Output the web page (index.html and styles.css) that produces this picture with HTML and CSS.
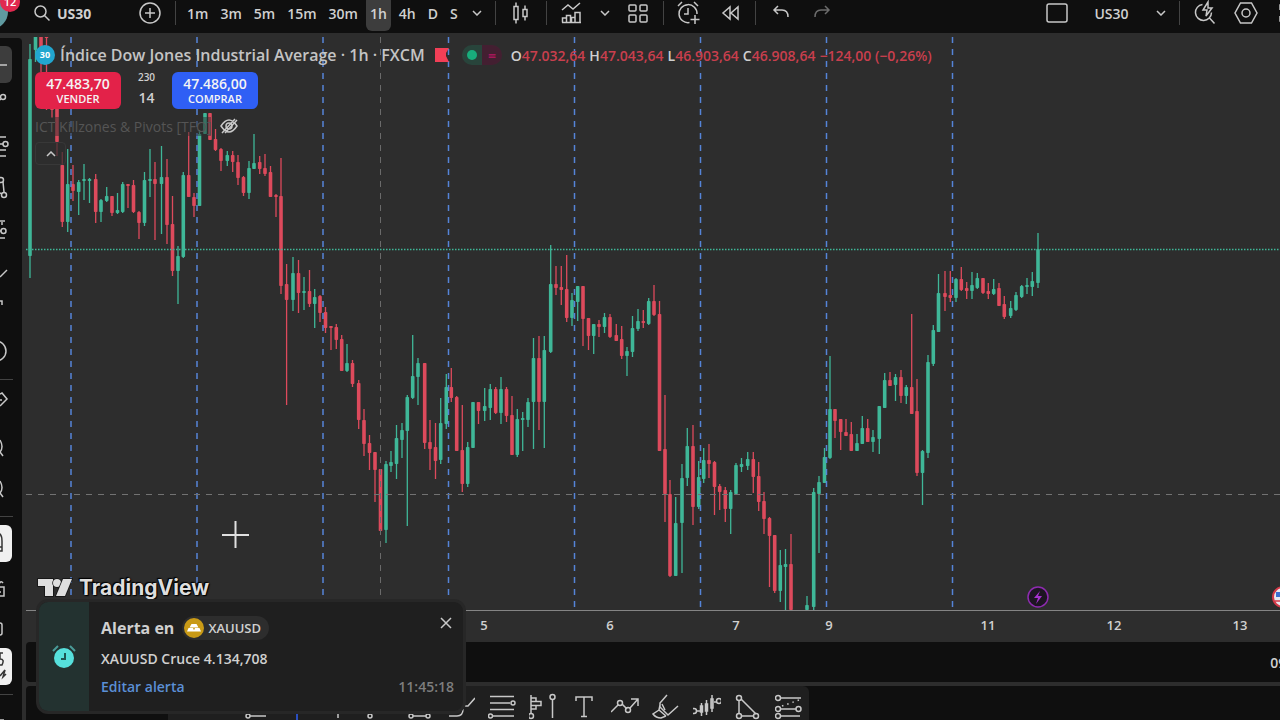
FILE: index.html
```
<!DOCTYPE html>
<html lang="es">
<head>
    <meta charset="UTF-8">
    <meta name="viewport" content="width=device-width, initial-scale=1.0">
    <title>US30 - TradingView</title>
    <link rel="stylesheet" href="styles.css">
</head>
<body>
    <header class="topbar">
        <button class="avatar" aria-label="Perfil"><span class="count">12</span></button>
        <button class="symbol">
            <svg width="18" height="18" viewBox="0 0 18 18"><circle cx="7.5" cy="7.5" r="5.5"/><path d="M11.5 11.5l5 5"/></svg>
            US30
        </button>
        <button class="icon" aria-label="Comparar">
            <svg width="24" height="24" viewBox="0 0 24 24"><circle cx="12" cy="12" r="10"/><path d="M12 7v10M7 12h10"/></svg>
        </button>
        <span class="sep"></span>
        <div class="intervals">
            <button>1m</button>
            <button>3m</button>
            <button>5m</button>
            <button>15m</button>
            <button>30m</button>
            <button class="active">1h</button>
            <button>4h</button>
            <button>D</button>
            <button>S</button>
        </div>
        <button class="chevron" aria-label="Intervalos"><svg width="10" height="6" viewBox="0 0 10 6"><path d="M1 1l4 4 4-4"/></svg></button>
        <span class="sep"></span>
        <button class="icon wide" aria-label="Velas">
            <svg width="24" height="24" viewBox="0 0 24 24"><path d="M5 5.500h4v13H5zM7 1.500v4M7 18.500v4M14 8.500h4v7h-4zM16 4.500v4M16 15.500v4"/></svg>
        </button>
        <span class="sep"></span>
        <button class="icon wide" aria-label="Indicadores">
            <svg width="24" height="24" viewBox="0 0 24 24"><path d="M2 9l6-5 5 4 7-6M2.500 21.500v-4.500h4v4.500M6.500 21.500v-7h4v7M11.500 21.500v-5h3.500v5M15 21.500v-10h5v10zM2 21.500h19"/></svg>
        </button>
        <button class="chevron" aria-label="Favoritos"><svg width="10" height="6" viewBox="0 0 10 6"><path d="M1 1l4 4 4-4"/></svg></button>
        <button class="icon grid" aria-label="Plantillas">
            <svg width="24" height="24" viewBox="0 0 24 24"><rect x="3" y="4" width="7" height="6" rx="1"/><rect x="14" y="4" width="7" height="6" rx="1"/><rect x="3" y="14" width="7" height="7" rx="1"/><rect x="14" y="14" width="7" height="7" rx="1"/></svg>
        </button>
        <span class="sep"></span>
        <button class="icon wide" aria-label="Alerta">
            <svg width="26" height="26" viewBox="0 0 26 26"><path d="M13.500 22.500A9 9 0 1 1 21 14M12 8v6H8M2 6l4-4M18 2l4 4M19 15v9M14.500 19.500h9"/></svg>
        </button>
        <button class="icon rewind" aria-label="Repetición">
            <svg width="20" height="16" viewBox="0 0 20 16"><path d="M9 2v12L2 8zM17 2v12l-7-6z"/></svg>
        </button>
        <span class="sep"></span>
        <button class="icon wide" aria-label="Deshacer">
            <svg width="18" height="16" viewBox="0 0 18 16"><path d="M6 1L2 5l4 4M2 5h8q6 0 6 7"/></svg>
        </button>
        <button class="icon redo" aria-label="Rehacer" disabled>
            <svg width="18" height="16" viewBox="0 0 18 16"><path d="M12 1l4 4-4 4M16 5H8q-6 0-6 7"/></svg>
        </button>
        <span class="spacer"></span>
        <button class="icon" aria-label="Diseño">
            <svg width="22" height="20" viewBox="0 0 22 20"><rect x="1" y="1" width="20" height="18" rx="2"/></svg>
        </button>
        <button class="layout-name">US30</button>
        <button class="chevron" aria-label="Diseños"><svg width="10" height="6" viewBox="0 0 10 6"><path d="M1 1l4 4 4-4"/></svg></button>
        <span class="sep"></span>
        <button class="icon wide" aria-label="Búsqueda rápida">
            <svg width="24" height="26" viewBox="0 0 24 26"><path d="M9.500 4.500a8 8 0 1 0 9 8M16.500 18l5 5.500M15 2l-5 8h4l-1 6 6-8h-4z"/></svg>
        </button>
        <button class="icon gear" aria-label="Configuración">
            <svg width="24" height="22" viewBox="0 0 24 22"><path d="M6.500 1h11L23 11l-5.500 10h-11L1 11z"/><circle cx="12" cy="11" r="4"/></svg>
        </button>
        <button class="fullscreen" aria-label="Pantalla completa">
            <svg width="8" height="18" viewBox="0 0 8 18"><path d="M8 1H2v5M2 12v5h6"/></svg>
        </button>
    </header>

    <div class="workspace">
        <aside class="tools">
            <button class="selected" aria-label="Línea"><svg viewBox="0 0 22 41"><path d="M0 21h7"/></svg></button>
            <button aria-label="Tendencia"><svg viewBox="0 0 22 41"><circle cx="3" cy="12" r="2.500"/><path d="M0 15l1-1"/></svg></button>
            <button aria-label="Fibonacci"><svg viewBox="0 0 22 41"><path d="M0 11h6M0 18h3M0 24h6M0 30h6"/><circle cx="5.500" cy="18" r="2.500"/></svg></button>
            <button aria-label="Patrones"><svg viewBox="0 0 22 41"><circle cx="1" cy="13" r="2.500"/><circle cx="4" cy="28" r="2.500"/><path d="M3 15l1 10M0 26l2 1"/></svg></button>
            <button aria-label="Previsión"><svg viewBox="0 0 22 41"><path d="M0 13h5M0 23h1M2 14v3M0 30h5"/><circle cx="3.500" cy="23" r="2.500"/></svg></button>
            <button aria-label="Pincel"><svg viewBox="0 0 22 41"><path d="M0 28l7-7"/></svg></button>
            <button aria-label="Texto"><svg viewBox="0 0 22 41"><path d="M0 11h2v4"/></svg></button>
            <button aria-label="Emojis"><svg viewBox="0 0 22 41"><circle cx="-4" cy="20" r="10"/></svg></button>
            <span class="line"></span>
            <button aria-label="Regla"><svg viewBox="0 0 22 41"><path d="M0 8l2-1 5 6-7 7M0 14h2"/></svg></button>
            <button aria-label="Acercar"><svg viewBox="0 0 22 41"><path d="M0 13q4 7 0 12M0 25l3 4"/></svg></button>
            <button aria-label="Alejar"><svg viewBox="0 0 22 41"><path d="M0 13q4 7 0 12M0 25l3 4"/></svg></button>
            <span class="line"></span>
            <button class="on" aria-label="Imán"><svg viewBox="0 0 22 41"><path d="M-6 28V14q0-4 4-4 4 1 4 8v10h-3V17M-1 24h3"/></svg></button>
            <button aria-label="Bloquear"><svg viewBox="0 0 22 41"><path d="M-4 23h8v9h-8M-1 23v-3q2-4 4-1M0 27v2"/></svg></button>
            <button aria-label="Ocultar"><svg viewBox="0 0 22 41"><rect x="-8" y="18" width="10" height="12" rx="2"/></svg></button>
            <button class="on" aria-label="Sincronizar"><svg viewBox="0 0 22 41"><path d="M3 7H0v6q5 0 2 6H0M0 30l5-6-2 7 3-3"/></svg></button>
            <span class="line"></span>
            <button aria-label="Eliminar"><svg viewBox="0 0 22 41"><path d="M0 19h4M2 19v12"/></svg></button>
        </aside>

        <main>
            <section class="chart">
                <svg id="plot" class="plot"></svg>

                <div class="legend">
                    <div class="legend-row">
                        <span class="index-logo">30</span>
                        <h1>Índice Dow Jones Industrial Average · 1h · FXCM</h1>
                        <svg class="flag" width="14" height="14" viewBox="0 0 14 14"><path d="M0 0h14l-3 5v3l3 6H0z"/></svg>
                        <span class="status"><i></i><b>=</b></span>
                        <p class="ohlc">
                            <span>O<em>47.032,64</em></span>
                            <span>H<em>47.043,64</em></span>
                            <span>L<em>46.903,64</em></span>
                            <span>C<em>46.908,64</em></span>
                            <em>−124,00 (−0,26%)</em>
                        </p>
                    </div>
                    <div class="trade">
                        <button class="sell"><strong>47.483,70</strong>VENDER</button>
                        <div class="spread"><small>230</small>14</div>
                        <button class="buy"><strong>47.486,00</strong>COMPRAR</button>
                    </div>
                    <div class="study">
                        <span>ICT Killzones &amp; Pivots [TFO]</span>
                        <svg width="20" height="16" viewBox="0 0 20 16"><path d="M2 8q8-12 16 0-8 12-16 0zM3 15L16 1M6 15L18 2"/><circle cx="10" cy="8" r="3"/></svg>
                    </div>
                    <button class="collapse" aria-label="Contraer"><svg width="10" height="6" viewBox="0 0 10 6"><path d="M1 5l4-4 4 4"/></svg></button>
                </div>

                <div class="brand">
                    <svg width="36" height="22" viewBox="0 0 36 22"><path d="M1 2h15v17H8V9H1z"/><circle cx="20" cy="6" r="4"/><path d="M26 2h9l-7 17h-9z"/></svg>
                    TradingView
                </div>
            </section>

            <section class="panel"><span>09:45</span></section>

            <footer class="bottom">
                <nav class="drawing">
                    <button aria-label="Línea horizontal"><svg viewBox="0 0 28 28"><circle cx="6" cy="23" r="2"/><path d="M8 23h16"/></svg></button>
                    <button class="blue" aria-label="Línea vertical"><svg viewBox="0 0 28 28"><path d="M14 3v25"/></svg></button>
                    <button aria-label="Cruz"><svg viewBox="0 0 28 28"><path d="M14 3v22"/></svg></button>
                    <button aria-label="Rayo"><svg viewBox="0 0 28 28"><circle cx="5" cy="23" r="2"/><path d="M6 21L22 5"/></svg></button>
                    <button aria-label="Rango"><svg viewBox="0 0 28 28"><circle cx="5" cy="23" r="2"/><circle cx="22" cy="23" r="2"/><path d="M7 23h13"/></svg></button>
                    <button aria-label="Curva"><svg viewBox="0 0 28 28"><path d="M2 23h8q6 0 6-7M18 13h3l7-8"/></svg></button>
                    <button aria-label="Retroceso de Fibonacci"><svg viewBox="0 0 28 28"><path d="M2 3.500h24M2 10h20M2 16.500h24M4 23h22"/><circle cx="25" cy="10" r="2"/><circle cx="2.500" cy="23" r="2"/></svg></button>
                    <button aria-label="Perfil de volumen"><svg viewBox="0 0 28 28"><path d="M2 2v19M2 5h5v3.500H2M2 8.500h10v4H2M7 12.500V16H2M23.500 6v19"/><circle cx="2" cy="23" r="2.500"/><circle cx="23.500" cy="4" r="2.500"/></svg></button>
                    <button aria-label="Texto"><svg viewBox="0 0 28 28"><path d="M6 8V4h16v4M14 4v19M11 23.500h6"/></svg></button>
                    <button aria-label="Trayectoria"><svg viewBox="0 0 28 28"><path d="M0 19l7-7M11 11l5 5M19 15l8-9M20 6h7v7"/><circle cx="9" cy="10" r="2.500"/><circle cx="17" cy="17" r="2.500"/></svg></button>
                    <button aria-label="Pincel"><svg viewBox="0 0 28 28"><path d="M15 2L8 10v4l8 8 10-9M8 12l-1 5 7 6M7 17l-6 4q3 4 8 4l5-2M10 11l3 6"/></svg></button>
                    <button aria-label="Patrón de barras"><svg viewBox="0 0 28 28"><path d="M3 18h4M21 9h3M8.500 10v13M13.500 7v15M19 2v17"/><path d="M7.500 13h2v6h-2zM12.500 11h2v7h-2zM18 6h2v9h-2z"/><circle cx="1" cy="18" r="2.500"/><circle cx="26" cy="8" r="2.500"/></svg></button>
                    <button aria-label="Triángulo"><svg viewBox="0 0 28 28"><path d="M5 7v14M7 6l15 15M7 23h13"/><circle cx="5" cy="5" r="2.500"/><circle cx="5" cy="23" r="2.500"/><circle cx="22" cy="23" r="2.500"/></svg></button>
                    <button aria-label="Canal"><svg viewBox="0 0 28 28"><path d="M5 5h21M5 16h16M5 23h20"/><circle cx="3" cy="5" r="2.500"/><circle cx="3" cy="16" r="2.500"/><circle cx="23.500" cy="16" r="2.500"/><circle cx="3" cy="23" r="2.500"/><path d="M7 13L24 7" stroke-dasharray="1.500 4"/></svg></button>
                </nav>
            </footer>
        </main>
    </div>

    <div class="toast" role="alert">
        <div class="toast-icon">
            <svg width="24" height="24" viewBox="0 0 24 24"><circle cx="12" cy="13" r="10"/><path class="bells" d="M1 6l5-5M18 1l5 5"/><path class="hands" d="M13 8v6H9"/></svg>
        </div>
        <div class="toast-body">
            <div class="toast-title">
                <h2>Alerta en</h2>
                <span class="chip">
                    <svg width="20" height="20" viewBox="0 0 20 20"><circle cx="10" cy="10" r="10"/><path d="M7.500 6h5l2 3.500h-9zM4.500 10h4.500l1.500 3.500H3zM11 10h4.500l1.500 3.500H9.500z"/></svg>
                    XAUUSD
                </span>
                <button class="close" aria-label="Cerrar"><svg width="12" height="12" viewBox="0 0 12 12"><path d="M1 1l10 10M11 1L1 11"/></svg></button>
            </div>
            <p>XAUUSD Cruce 4.134,708</p>
            <div class="toast-foot">
                <a href="#">Editar alerta</a>
                <time>11:45:18</time>
            </div>
        </div>
    </div>

    <script src="chart.js"></script>
</body>
</html>
```
FILE: styles.css
```
* {
    box-sizing: border-box;
}

body {
    margin: 0;
    height: 100vh;
    display: flex;
    flex-direction: column;
    overflow: hidden;
    position: relative;
    background-color: #2d2d2d;
    color: #d0d0d0;
    font-family: "Open Sans", "Noto Sans", sans-serif;
    font-size: 14px;
}

h1, h2, p {
    margin: 0;
}

button {
    padding: 0;
    border: none;
    background: none;
    color: inherit;
    font: inherit;
    cursor: pointer;
}

svg {
    flex: none;
    fill: none;
    stroke: #c8c8c8;
    stroke-width: 1.5;
}

em {
    font-style: normal;
}

/* Top bar */
.topbar {
    flex: none;
    height: 33px;
    padding-bottom: 2px;
    display: flex;
    align-items: flex-end;
    overflow: hidden;
    background-color: #0f0f0f;
    font-weight: 600;
}

.topbar button {
    flex: none;
    height: 36px;
    display: flex;
    align-items: center;
    justify-content: center;
}

.topbar .avatar {
    width: 33px;
    position: relative;
}

.avatar::before {
    content: "";
    position: absolute;
    left: -26px;
    top: 0;
    width: 34px;
    height: 34px;
    border-radius: 50%;
    background-color: #5f9aa0;
}

.count {
    position: absolute;
    left: 0;
    top: -3px;
    width: 20px;
    height: 20px;
    border-radius: 50%;
    background-color: #e0294f;
    color: #fff;
    font-size: 11px;
    line-height: 20px;
}

.topbar .symbol {
    width: 99px;
    gap: 6px;
    justify-content: flex-start;
    font-weight: 700;
}

.icon {
    width: 36px;
}

.topbar .wide {
    width: 50px;
}

.topbar .grid {
    width: 50px;
    margin-left: -5px;
}

.topbar .rewind {
    width: 48px;
    margin-left: -7px;
}

.topbar .redo {
    width: 32px;
    opacity: 0.5;
}

.topbar .gear {
    width: 32px;
}

.topbar .sep {
    flex: none;
    width: 1px;
    height: 24px;
    margin: 0 0 6px 0;
    background-color: #434343;
}

.symbol + .icon + .sep {
    margin-left: 7px;
}

.intervals {
    display: flex;
    padding-left: 5px;
}

.intervals button {
    padding: 0 6px;
}

.intervals .active {
    padding: 0 4px;
    margin: 0 2px;
    border-radius: 6px;
    background-color: #3d3d3d;
}

.topbar .chevron {
    width: 26px;
}

.topbar .wide + .chevron {
    margin-left: -5px;
}

.chevron + .sep {
    margin-left: 5px;
}

.spacer {
    flex: 1;
}

.topbar .layout-name {
    width: 73px;
}

.topbar .fullscreen {
    width: 18px;
    justify-content: flex-end;
    overflow: hidden;
}

.fullscreen svg {
    margin-right: -6px;
}

/* Left drawing tools */
.workspace {
    flex: 1;
    min-height: 0;
    display: flex;
}

.tools {
    flex: none;
    width: 22px;
    margin-top: 5px;
    padding-top: 6px;
    display: flex;
    flex-direction: column;
    overflow: hidden;
    border-radius: 0 4px 0 0;
    background-color: #0f0f0f;
}

.tools button {
    flex: none;
    height: 41px;
}

.tools svg {
    display: block;
    width: 22px;
    height: 41px;
}

.tools .selected,
.tools .on {
    width: 12px;
    height: 37px;
    margin: 2px 0;
    border-radius: 0 6px 6px 0;
    background-color: #3d3d3d;
}

.tools .selected svg,
.tools .on svg {
    margin-top: -2px;
}

.tools .on {
    background-color: #f0f0f0;
}

.tools .on svg {
    stroke: #333;
}

.tools .line {
    flex: none;
    width: 13px;
    height: 1px;
    margin: 7px 0 6px;
    background-color: #434343;
}

/* Chart */
main {
    flex: 1;
    min-width: 0;
    padding: 4px 0 0 4px;
    display: flex;
    flex-direction: column;
}

.chart {
    flex: 1;
    min-height: 0;
    position: relative;
}

.plot {
    display: block;
    width: 100%;
    height: 100%;
}

.plot text {
    fill: #d0d0d0;
    stroke: none;
    font-size: 13px;
    font-weight: 600;
    text-anchor: middle;
}

.legend {
    position: absolute;
    left: 9px;
    top: 7px;
}

.legend-row {
    height: 22px;
    display: flex;
    align-items: center;
}

.index-logo {
    width: 20px;
    height: 20px;
    margin-right: 5px;
    border-radius: 50%;
    background-color: #22a6cf;
    color: #fff;
    font-size: 9px;
    font-weight: 700;
    line-height: 20px;
    text-align: center;
}

.legend h1 {
    color: #c4c4c4;
    font-size: 16px;
    font-weight: 600;
    white-space: nowrap;
}

.flag {
    margin-left: 10px;
    fill: #f23f57;
    stroke: none;
}

.status {
    width: 40px;
    height: 20px;
    margin: 0 9px 0 13px;
    display: flex;
    align-items: center;
    justify-content: space-around;
    border-radius: 10px;
    background: linear-gradient(90deg, #28443b 50%, #431f31 50%);
    color: #a5175a;
}

.status i {
    width: 10px;
    height: 10px;
    border-radius: 50%;
    background-color: #18ad7c;
}

.ohlc {
    display: flex;
    gap: 4px;
    white-space: nowrap;
    font-weight: 600;
}

.ohlc em {
    color: #c93f4d;
}

.trade {
    display: flex;
    margin-top: 6px;
    line-height: 15px;
}

.trade button {
    width: 86px;
    height: 37px;
    border-radius: 6px;
    color: #f4f4f4;
    font-size: 11px;
    font-weight: 600;
}

.trade strong {
    display: block;
    font-size: 14px;
    font-weight: 600;
}

.sell {
    background-color: #e32249;
}

.buy {
    background-color: #2f5ff5;
}

.spread {
    width: 51px;
    text-align: center;
    font-weight: 600;
}

.spread small {
    display: block;
    height: 18px;
    font-size: 10px;
    line-height: 11px;
}

.study {
    height: 24px;
    margin-top: 5px;
    display: flex;
    align-items: center;
    gap: 8px;
    color: #555;
    white-space: nowrap;
}

.study span {
    background-color: rgba(45, 45, 45, 0.5);
}

.collapse {
    width: 31px;
    height: 23px;
    margin-top: 4px;
    display: flex;
    align-items: center;
    justify-content: center;
    border: 1px solid #383838;
    border-radius: 4px;
    background-color: rgba(45, 45, 45, 0.7);
}

.brand {
    position: absolute;
    left: 11px;
    bottom: 40px;
    display: flex;
    align-items: center;
    gap: 6px;
    color: #dedede;
    font-family: Inter, sans-serif;
    font-size: 21px;
    font-weight: 700;
    line-height: 28px;
    text-shadow: 0 0 2px #000, 1px 1px 1px #000, -1px -1px 1px #000;
}

.brand svg {
    fill: #dedede;
    stroke: #111;
    paint-order: stroke;
}

/* Lower panels */
.panel {
    flex: none;
    height: 40px;
    display: flex;
    align-items: center;
    justify-content: flex-end;
    overflow: hidden;
    border-radius: 4px 0 0 4px;
    background-color: #0f0f0f;
    font-weight: 600;
}

.panel span {
    margin-right: -26px;
}

.bottom {
    flex: none;
    height: 34px;
    margin-top: 4px;
    padding-left: 142px;
    display: flex;
    overflow: hidden;
    border-radius: 4px 0 0 0;
    background-color: #0f0f0f;
}

.drawing {
    display: flex;
    padding-left: 67px;
    height: 41px;
    border-radius: 0 6px 0 0;
    background-color: #1f1f1f;
}

.drawing button {
    width: 41px;
    height: 41px;
    display: flex;
    align-items: center;
    justify-content: center;
}

.drawing svg {
    width: 28px;
    height: 28px;
}

.drawing .blue svg {
    stroke: #2f5ff5;
}

/* Alert toast */
.toast {
    position: absolute;
    left: 36px;
    bottom: 6px;
    width: 430px;
    height: 115px;
    display: flex;
    overflow: hidden;
    border: 3px solid #272727;
    border-radius: 12px;
    background-color: #1f1f1f;
}

.toast-icon {
    flex: none;
    width: 50px;
    display: flex;
    align-items: center;
    justify-content: center;
    background-color: #233230;
}

.toast-icon svg {
    fill: #56e0dc;
    stroke: none;
}

.toast-icon .bells {
    stroke: #4a9b98;
    stroke-width: 2;
}

.toast-icon .hands {
    fill: none;
    stroke: #1f5553;
    stroke-width: 2;
}

.toast-body {
    flex: 1;
    padding: 13px 9px 0 12px;
    line-height: 20px;
    font-weight: 600;
}

.toast-title {
    height: 26px;
    display: flex;
    align-items: center;
    gap: 8px;
}

.toast h2 {
    font-size: 16px;
    font-weight: 700;
}

.chip {
    height: 24px;
    padding: 0 8px 0 2px;
    display: flex;
    align-items: center;
    gap: 4px;
    border-radius: 12px;
    background-color: #2d2d2d;
    font-size: 13px;
}

.chip svg {
    fill: #c99a16;
    stroke: none;
}

.chip path {
    fill: #fff;
}

.close {
    margin: 0 2px 10px auto;
    line-height: 12px;
}

.toast p {
    margin-top: 8px;
}

.toast-foot {
    margin-top: 8px;
    display: flex;
    justify-content: space-between;
}

.toast a {
    color: #5b8fd6;
    text-decoration: none;
}

.toast time {
    color: #7d7d7d;
}
```
FILE: chart.js
```
const UP = '#3fb798';
const DOWN = '#dd4a5c';

// x, high, low, body top, body bottom, 1 = up / 0 = down
const candles = [
    [30, 44, 278, 59, 256, 1], [35.5, 30, 62, 30, 50, 1], [41, 30, 72, 30, 60, 0], [46.5, 30, 110, 36, 38, 0],
    [52, 100, 118, 108, 110, 0], [57, 90, 156, 100, 142, 0], [62.300, 152, 227, 165, 222, 0], [67.700, 149, 232, 184, 222, 1],
    [73, 165, 201, 184, 191, 0], [78.700, 180, 215, 182, 192, 1], [84, 164, 200, 179, 181, 1], [89.500, 178, 203, 179, 181, 1],
    [95.700, 174, 223, 179, 212, 0], [101, 199, 222, 200, 212, 1], [106.700, 187, 202, 196, 201, 1], [112, 196, 216, 196, 213, 0],
    [117.500, 193, 214, 210, 213, 1], [122.700, 182, 213, 184, 212, 1], [128, 184, 208, 184, 186, 0], [133.500, 180, 213, 185, 212, 0],
    [139, 211, 239, 212, 223, 0], [144.500, 172, 226, 180, 223, 1], [150, 149, 197, 179, 181, 1], [155, 162, 240, 179, 184, 0],
    [161.500, 146, 234, 177, 184, 1], [167, 159, 244, 177, 225, 0], [172.500, 196, 276, 224, 271, 0], [178, 246, 304, 256, 271, 1],
    [183.300, 172, 258, 175, 257, 1], [188.700, 132, 197, 175, 197, 0], [194, 193, 217, 197, 206, 0], [199.500, 130, 206, 134, 206, 1],
    [205, 113, 134, 113, 134, 1], [210, 113, 140, 113, 140, 0], [215.500, 129, 151, 139, 150, 0], [221, 148, 171, 149, 161, 0],
    [227.300, 151, 166, 155, 161, 1], [232.700, 151, 172, 155, 162, 0], [238, 155, 185, 162, 178, 0], [243.500, 176, 196, 177, 193, 0],
    [249, 161, 199, 168, 193, 1], [254, 134, 169, 163, 169, 1], [259.700, 156, 174, 162, 169, 0], [265, 154, 176, 168, 174, 0],
    [270.500, 166, 197, 172, 197, 0], [276, 194, 217, 195, 197, 0], [281, 158, 294, 196, 286, 0], [286.600, 264, 405, 284, 300, 0],
    [293, 257, 311, 273, 300, 1], [298.500, 260, 313, 273, 293, 0], [304, 277, 310, 291, 293, 1], [309.500, 270, 307, 291, 304, 0],
    [314.700, 289, 328, 297, 304, 1], [320, 295, 322, 296, 313, 0], [325.500, 307, 333, 312, 328, 0], [331, 326, 350, 326, 328, 0],
    [336.300, 324, 349, 327, 340, 0], [341.700, 335, 371, 339, 371, 0], [347, 344, 372, 363, 371, 1], [352.500, 360, 387, 363, 384, 0],
    [358.700, 380, 429, 383, 420, 0], [364, 409, 456, 420, 444, 0], [369.500, 435, 470, 443, 453, 0], [375, 452, 502, 452, 470, 0],
    [380.500, 469, 531, 469, 531, 0], [386, 461, 543, 464, 530, 1], [391, 451, 472, 462, 466, 1], [396.500, 425, 479, 438, 464, 1],
    [402, 423, 458, 430, 440, 1], [407.300, 395, 526, 397, 431, 1], [412.700, 335, 399, 376, 398, 1], [418, 358, 405, 363, 377, 1],
    [424.700, 363, 449, 363, 443, 0], [430, 420, 470, 442, 449, 0], [435.500, 423, 479, 447, 461, 0], [440.700, 398, 464, 423, 460, 1],
    [446.300, 374, 429, 387, 424, 1], [451.300, 368, 402, 387, 398, 0], [456.700, 396, 451, 397, 451, 0], [462.300, 405, 492, 450, 484, 0],
    [467.700, 442, 487, 447, 484, 1], [473, 402, 448, 402, 448, 1], [478.500, 402, 424, 402, 411, 0], [484.700, 388, 421, 406, 411, 1],
    [490.300, 384, 420, 389, 408, 1], [495.700, 387, 414, 389, 413, 0], [501, 377, 424, 389, 413, 1], [506.500, 387, 422, 389, 416, 0],
    [512, 396, 455, 415, 455, 0], [517.300, 409, 457, 419, 455, 1], [522.700, 412, 451, 418, 420, 1], [528, 398, 427, 402, 420, 1],
    [533.500, 338, 449, 358, 402, 1], [539, 336, 430, 358, 402, 0], [544.300, 336, 448, 350, 402, 1], [550.700, 245, 353, 284, 352, 1],
    [556, 266, 295, 284, 288, 0], [561.300, 266, 305, 287, 290, 0], [566.700, 255, 322, 289, 318, 0], [572, 293, 326, 300, 318, 1],
    [577.700, 286, 321, 286, 302, 1], [583, 286, 346, 286, 319, 0], [588.500, 318, 350, 318, 336, 0], [593.700, 324, 354, 324, 336, 1],
    [599, 320, 337, 324, 327, 0], [604.500, 313, 333, 317, 327, 1], [610, 314, 338, 317, 337, 0], [616.300, 324, 341, 335, 341, 0],
    [621.700, 326, 359, 339, 356, 0], [627, 347, 376, 351, 356, 1], [632.500, 316, 357, 328, 352, 1], [638, 309, 331, 321, 329, 1],
    [643.300, 310, 328, 321, 323, 0], [648.700, 298, 325, 301, 324, 1], [654, 285, 316, 301, 315, 0], [659.500, 301, 451, 314, 451, 0],
    [665, 395, 522, 449, 494, 0], [670, 480, 577, 494, 576, 0], [675.700, 497, 576, 523, 576, 1], [682, 464, 573, 478, 523, 1],
    [687.300, 428, 486, 446, 478, 1], [693, 425, 525, 446, 507, 0], [698.700, 461, 509, 477, 507, 1], [703.700, 448, 483, 460, 479, 1],
    [709, 444, 478, 460, 464, 0], [714.500, 461, 515, 462, 487, 0], [719.700, 484, 510, 486, 492, 0], [725.300, 487, 522, 490, 509, 0],
    [730.700, 490, 534, 492, 509, 1], [736, 463, 494, 465, 494, 1], [741.500, 458, 472, 464, 467, 1], [747.700, 452, 470, 459, 466, 1],
    [753.300, 452, 493, 459, 477, 0], [758.700, 462, 511, 476, 502, 0], [764, 492, 534, 501, 519, 0], [769.500, 517, 587, 518, 536, 0],
    [774.700, 535, 593, 535, 591, 0], [780.300, 550, 602, 565, 591, 1], [785.500, 549, 610, 564, 567, 1], [791, 534, 610, 564, 610, 0],
    [807, 596, 610, 605, 610, 1], [813.700, 488, 610, 492, 607, 1], [819, 476, 553, 482, 494, 1], [824.500, 448, 483, 457, 483, 1],
    [830, 356, 459, 409, 458, 1], [835, 409, 438, 409, 421, 0], [840.700, 419, 450, 419, 432, 0], [846, 419, 436, 432, 436, 0],
    [851.300, 422, 451, 434, 451, 0], [857, 434, 451, 443, 451, 1], [862.300, 416, 444, 428, 444, 1], [867.700, 419, 442, 428, 442, 0],
    [873, 430, 452, 437, 442, 1], [879.300, 406, 454, 406, 439, 1], [884.700, 373, 408, 380, 408, 1], [890, 372, 386, 380, 386, 0],
    [895.500, 374, 401, 377, 385, 1], [901, 370, 403, 377, 396, 0], [906.300, 385, 404, 387, 396, 1], [911.700, 314, 414, 387, 414, 0],
    [917, 379, 476, 411, 473, 0], [922.500, 450, 505, 451, 473, 1], [928, 355, 458, 362, 453, 1], [933.300, 325, 366, 330, 364, 1],
    [938.500, 274, 332, 293, 332, 1], [945, 271, 311, 293, 297, 0], [950.300, 271, 302, 295, 298, 0], [956, 278, 302, 279, 298, 1],
    [961.300, 267, 291, 279, 290, 0], [966.700, 282, 299, 288, 291, 0], [972, 272, 299, 285, 291, 1], [977.300, 273, 289, 278, 288, 1],
    [983, 278, 294, 278, 293, 0], [988.300, 283, 299, 291, 294, 0], [993.700, 279, 295, 289, 294, 1], [999, 283, 306, 288, 306, 0],
    [1004.300, 296, 319, 304, 317, 0], [1010.700, 301, 318, 308, 316, 1], [1016, 292, 311, 295, 310, 1], [1021.700, 285, 298, 286, 297, 1],
    [1027, 278, 294, 285, 287, 1], [1032.300, 272, 296, 281, 287, 1], [1038, 233, 288, 249, 283, 1]
];

const sessions = [71, 197, 323, 448.5, 574.5, 700.5, 826.5, 952.5];
const days = [[484, '5'], [610, '6'], [736, '7'], [829, '9'], [988, '11'], [1114, '12'], [1240, '13']];

function line(x1, y1, x2, y2, color, dash = '', width = 1) {
    return `<line x1="${x1}" y1="${y1}" x2="${x2}" y2="${y2}" stroke="${color}" stroke-width="${width}" stroke-dasharray="${dash}"/>`;
}

let out = '<g transform="translate(-26 -37)">';

candles.forEach(([x, high, low, top, bottom, up]) => {
    const color = up ? UP : DOWN;
    out += line(x, high, x, low, color, '', 1.3);
    out += `<rect x="${x - 1.8}" y="${top}" width="3.6" height="${bottom - top}" rx="0.8" fill="${color}" stroke="none"/>`;
});

// Session breaks, crosshair and last price
sessions.forEach(x => out += line(x, 37, x, 610, '#5584d8', '6 6', 1.5));
out += line(380.5, 37, 380.5, 610, '#6a6a6a', '6 6');
out += line(26, 494.5, 4000, 494.5, '#727272', '6 6');
out += line(26, 249.5, 4000, 249.5, UP, '1.5 1.5', 1.5);

// Time axis
out += line(26, 610.5, 4000, 610.5, '#848484');
days.forEach(([x, label]) => out += `<text x="${x}" y="630">${label}</text>`);

// Event markers
out += '<circle cx="1038" cy="597" r="10" fill="#1d1522" stroke="#8e2bb0"/>';
out += '<path d="M1040 591l-6 7h4l-2 6 6-8h-4z" fill="#a733cf" stroke="none"/>';
out += '<circle cx="1283" cy="597" r="10" fill="#e8e8ee" stroke="#d33a48" stroke-width="2"/>';
out += '<path d="M1276 592h6v5h-6z" fill="#3b6fd0" stroke="none"/><path d="M1275 601h8" stroke="#d33a48"/>';

out += line(222, 535, 249, 535, '#e0e0e0', '', 2) + line(235.5, 521, 235.5, 548, '#e0e0e0', '', 2);
out += '</g>';

document.getElementById('plot').innerHTML = out;
```
